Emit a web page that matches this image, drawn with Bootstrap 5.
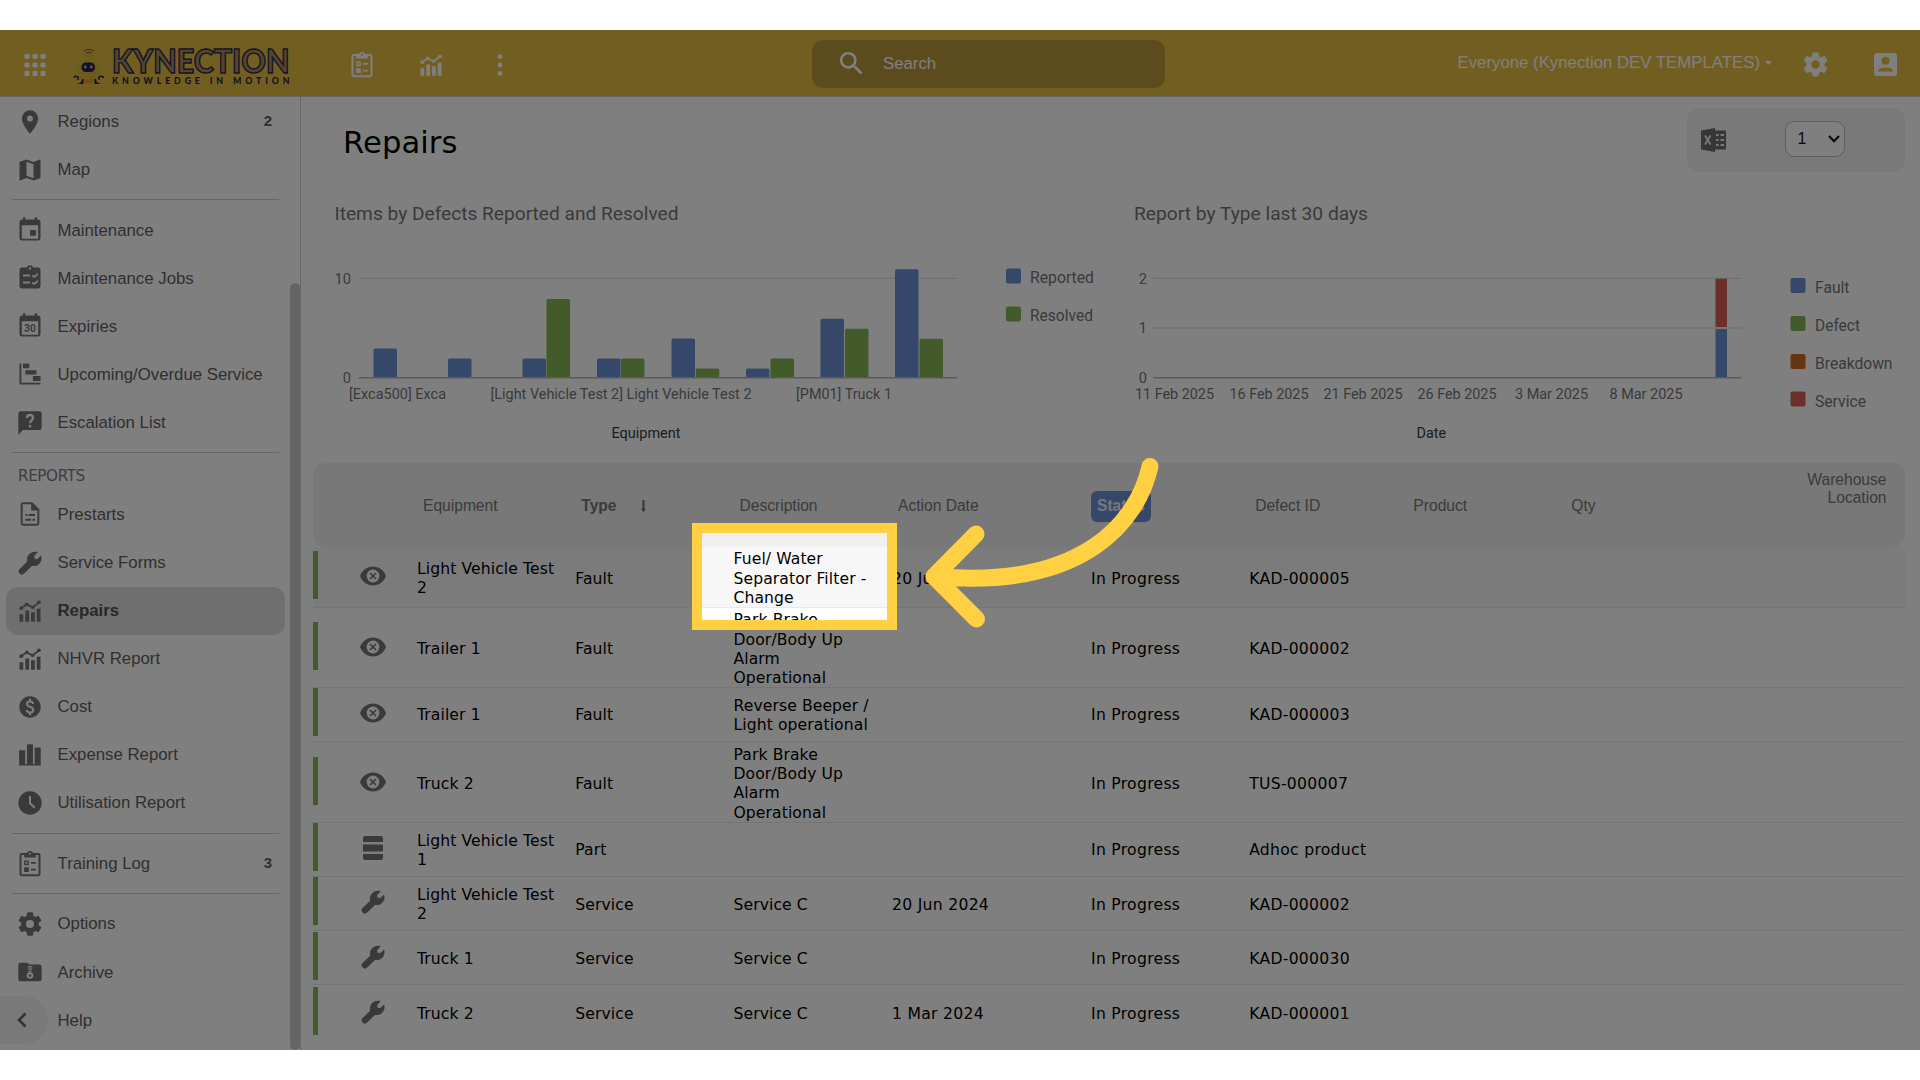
<!DOCTYPE html>
<html lang="en">
<head>
<meta charset="utf-8">
<meta name="viewport" content="width=device-width, initial-scale=1">
<title>Repairs</title>
<link href="https://cdn.jsdelivr.net/npm/bootstrap@5.3.0/dist/css/bootstrap.min.css" rel="stylesheet">
<style>
body{background:#fff;overflow:hidden;height:1080px;font-family:"Liberation Sans",Arial,sans-serif;color:#606060}
.app{margin-top:30px;height:1020px;background:#fff}
.topbar{height:67px;background:#e7bd45;border-bottom:1.5px solid #c9c9c9;padding:0 23px 0 24px;color:#fff}
.topbar svg{display:block}
.topicon{margin-top:3px}
.searchbox{width:353px;height:48px;border-radius:11px;background:#b9973a;padding-left:24px;font-size:16.8px;margin-left:309px;margin-top:1px}
.side{width:301px;border-right:1.5px solid #d0d0d0;padding:.5px 15px 0 6px;font-size:16.8px}
.side a{height:48.1px;color:#606060;text-decoration:none;padding:0 13px 0 9.5px;border-radius:12px}
.side a b{font-size:15px}
.side a svg{width:28px;height:28px;margin-right:14px;fill:#747474;color:#747474;flex:none}
.side a.on{background:#dedede;color:#535353;font-weight:700}
.side .rule{height:12.4px;padding:5.5px 6px 0 6px}
.side .rule::before{content:"";display:block;height:1px;background:#cacaca}
.side h6{margin:0;height:31.5px;padding:7px 0 0 12px;font:15.2px/20px "DejaVu Sans",sans-serif;letter-spacing:-.4px;color:#7d7d7d}
.thumb{right:0;top:185.5px;width:10px;height:767px;border-radius:5px;background:#cbcbcb}
.collapser{left:0;bottom:6px;width:48px;height:48px;background:#f3f3f3;border-radius:0 24px 24px 0;padding-left:16px}
.heading{height:83px;padding:11px 15.5px 0 42px}
.heading h1{font:30.6px/36px "DejaVu Sans",sans-serif;color:#000;margin:17px 0 0;letter-spacing:.1px}
.tools{width:217.5px;height:64px;border-radius:12px;background:#f2f2f2;padding:0 60px 1px 14px}
.pager{width:60px;height:36.5px;border:1.5px solid #bcbcbc;border-radius:9px;background:#fff;color:#111;font:16px "Liberation Sans",sans-serif;padding:0 4px 0 12px;margin-top:-1.5px}
.charts{height:283px}
.charts svg{font-family:Roboto,sans-serif;font-size:14.7px;fill:#757575;display:block}
.blu{fill:#6c90d2}.grn{fill:#86b654}.org{fill:#cf6c22}.red{fill:#d86054}
.grid-line{fill:#e2e2e2}.axis{fill:#b4b4b4}
.cap{font-size:19.2px}.axt{fill:#3a3a3a}
.list{margin:0 15.5px 0 11.500px;font:15.6px/19.4px "DejaVu Sans",sans-serif;letter-spacing:.1px;color:#000}
.line{display:grid;grid-template-columns:104.500px 158.3px 158.2px 158.5px 199px 158.2px 158.2px 158px 1fr;align-items:center;border-bottom:1.5px solid #e9e9e9}
.line>span{padding-top:3.6px}
.line>span:nth-child(n+5){letter-spacing:.3px}
.line.headrow{height:83.5px;border:0;border-radius:12px;background:#f0f0f0;font:15.6px/18px "Liberation Sans",sans-serif;color:#777;letter-spacing:0}
.headrow>span:nth-child(n){padding:2.5px 0 0 6px;letter-spacing:0}
.headrow>b{padding:2.5px 0 0 6px}
.line>.ico{display:flex;align-items:center;height:48px;border-left:5px solid #86b654;padding:2px 0 0 41.500px;margin-top:-4px}
.ico svg{width:28px;height:28px;fill:#747474;color:#747474}
.statusbtn{background:#6c90d2;color:#e9eefa;font-weight:700;border-radius:6px;padding:6.5px 6px;display:inline-block;margin-left:-6px}
.warehouse{padding:5.5px 18px 0 0}
.spot{left:692px;top:493px;width:205px;height:107px;border:10.3px solid #ffd142;box-shadow:0 0 0 2000px rgba(0,0,0,.5);z-index:5}
.pointer{left:0;top:-30px;z-index:6}
</style>
</head>
<body>
<svg width="0" height="0" class="position-absolute">
<defs>
<symbol id="pin" viewBox="0 0 24 24"><path d="M12,11.5A2.5,2.5 0 0,1 9.5,9A2.5,2.5 0 0,1 12,6.5A2.5,2.5 0 0,1 14.5,9A2.5,2.5 0 0,1 12,11.5M12,2A7,7 0 0,0 5,9C5,14.25 12,22 12,22C12,22 19,14.25 19,9A7,7 0 0,0 12,2Z"/></symbol>
<symbol id="map" viewBox="0 0 24 24"><path d="M15,19L9,16.89V5L15,7.11M20.5,3C20.44,3 20.39,3 20.34,3L15,5.1L9,3L3.36,4.9C3.15,4.97 3,5.15 3,5.38V20.5A0.5,0.5 0 0,0 3.5,21C3.55,21 3.61,21 3.66,20.97L9,18.9L15,21L20.64,19.1C20.85,19 21,18.85 21,18.62V3.5A0.5,0.5 0 0,0 20.5,3Z"/></symbol>
<symbol id="event" viewBox="0 0 24 24"><path d="M19,19.5H5V8H19M16,1V3H8V1H6V3H5C3.89,3 3,3.89 3,5V19A2,2 0 0,0 5,21H19A2,2 0 0,0 21,19V5C21,3.89 20.1,3 19,3H18V1M17,12H12V17H17V12Z"/></symbol>
<symbol id="jobs" viewBox="0 0 24 24"><path fill-rule="evenodd" d="M19,3H14.8A3,3 0 0,0 9.2,3H5A2,2 0 0,0 3,5V19A2,2 0 0,0 5,21H19A2,2 0 0,0 21,19V5A2,2 0 0,0 19,3M12,2.8A1,1 0 1,1 12,4.8A1,1 0 1,1 12,2.8M6,9H12V10.7H6ZM6,15H12V16.7H6ZM13.5,10.5L14.5,9.3L15.7,10L18.8,7.6V9.5L15.7,12ZM13.5,16.5L14.5,15.3L15.7,16L18.8,13.6V15.5L15.7,18Z"/></symbol>
<symbol id="cal30" viewBox="0 0 24 24"><path d="M19,19.5H5V8H19M16,1V3H8V1H6V3H5C3.89,3 3,3.89 3,5V19A2,2 0 0,0 5,21H19A2,2 0 0,0 21,19V5C21,3.89 20.1,3 19,3H18V1Z"/><text x="12" y="17.3" font-size="8.8" font-weight="700" text-anchor="middle" font-family="Roboto,sans-serif">30</text></symbol>
<symbol id="gantt" viewBox="0 0 24 24"><path d="M3,3H4.6V19.4H21V21H4A1,1 0 0,1 3,20ZM6,3H11.4V7H6ZM8,8.7H17.5V12.5H8ZM14.5,13.7H21V18H14.5Z"/></symbol>
<symbol id="ask" viewBox="0 0 24 24"><path d="M4,2H20A2,2 0 0,1 22,4V16A2,2 0 0,1 20,18H6L2,22V4A2,2 0 0,1 4,2Z"/><path d="M9.4,7.8C9.4,4.3 14.6,4.3 14.6,7.6C14.6,9.8 12,9.6 12,12.2M12,13.8V15.8" fill="none" stroke="#fff" stroke-width="2"/></symbol>
<symbol id="doc" viewBox="0 0 24 24"><path fill-rule="evenodd" d="M14,2H6A2,2 0 0,0 4,4V20A2,2 0 0,0 6,22H18A2,2 0 0,0 20,20V8ZM18.3,20.3H5.7V3.7H13V9H18.3ZM8,12H9.8V13.8H8ZM10.8,12H16.3V13.8H10.8ZM8,16H13V17.8H8ZM14.2,16H16.2V17.8H14.2Z"/></symbol>
<symbol id="wrench" viewBox="0 0 24 24"><path d="M3.100,20.900A2.700,2.700 0 0,1 3.100,17.100L9.500,10.900C8.600,6.600 11.500,2.500 16,2.300C17,2.250 18,2.400 18.700,2.700L15.600,5.900L15.900,8.300L18.300,8.600L21.500,5.500C23.200,10.300 19.500,15.300 13.700,14.600L7,21A2.700,2.700 0 0,1 3.100,20.900Z"/></symbol>
<symbol id="chart" viewBox="0 0 24 24"><path d="M3,14.8H6.2V21.2H3ZM8,11.5H11.2V21.2H8ZM12.9,13H16.1V21.2H12.9ZM17.8,10H21V21.2H17.8Z"/><path d="M4.4,9.6L9,6.4L14.3,8.9L19.8,4.5" fill="none" stroke="currentColor" stroke-width="1.5"/><circle cx="4.5" cy="9.6" r="1.6"/><circle cx="9.2" cy="6.3" r="1.5"/><circle cx="14.3" cy="8.9" r="1.4"/><circle cx="19.7" cy="4.5" r="1.6"/></symbol>
<symbol id="cost" viewBox="0 0 24 24"><circle cx="12" cy="12" r="9.2"/><path d="M14.7,9.3C14.2,6.6 9.4,6.7 9.4,9.4C9.4,12.3 14.8,11.2 14.8,14.5C14.8,17.4 9.4,17.4 9.1,14.5M12,5V7.4M12,16.7V19" fill="none" stroke="#fff" stroke-width="1.8"/></symbol>
<symbol id="bars" viewBox="0 0 24 24"><path d="M2.7,8H7.9V19.8H9.4V2.8H14.5V19.8H16V5.5H21.2V21H2.7Z"/></symbol>
<symbol id="clock" viewBox="0 0 24 24"><circle cx="12" cy="12" r="10"/><path d="M12,6V12.2L16,16" fill="none" stroke="#fff" stroke-width="1.7"/></symbol>
<symbol id="clip" viewBox="0 0 24 24"><path fill-rule="evenodd" d="M19,2.6H14.7A2.9,2.9 0 0,0 9.3,2.6H5A2,2 0 0,0 3,4.6V20.5A2,2 0 0,0 5,22.5H19A2,2 0 0,0 21,20.5V4.6A2,2 0 0,0 19,2.6M12,2.3A.9,.9 0 1,1 12,4.1A.9,.9 0 1,1 12,2.3M4.7,4.3H7V6.4H17V4.3H19.3V20.8H4.7ZM7,9V13H11V9ZM8.2,10.2H9.8V11.8H8.2ZM7,14.8V18.8H11V14.8ZM12.8,10.2V11.8H17V10.2ZM12.8,16V17.6H17V16Z"/></symbol>
<symbol id="cog" viewBox="0 0 24 24"><path d="M12,15.5A3.5,3.5 0 0,1 8.5,12A3.5,3.5 0 0,1 12,8.5A3.5,3.5 0 0,1 15.5,12A3.5,3.5 0 0,1 12,15.5M19.43,12.97C19.47,12.65 19.5,12.33 19.5,12C19.5,11.67 19.47,11.34 19.43,11L21.54,9.37C21.73,9.22 21.78,8.95 21.66,8.73L19.66,5.27C19.54,5.05 19.27,4.96 19.05,5.05L16.56,6.05C16.04,5.66 15.5,5.32 14.87,5.07L14.5,2.42C14.46,2.18 14.25,2 14,2H10C9.75,2 9.54,2.18 9.5,2.42L9.13,5.07C8.5,5.32 7.96,5.66 7.44,6.05L4.95,5.05C4.73,4.96 4.46,5.05 4.34,5.27L2.34,8.73C2.21,8.95 2.27,9.22 2.46,9.37L4.57,11C4.53,11.34 4.5,11.67 4.5,12C4.5,12.33 4.53,12.65 4.57,12.97L2.46,14.63C2.27,14.78 2.21,15.05 2.34,15.27L4.34,18.73C4.46,18.95 4.73,19.03 4.95,18.95L7.44,17.94C7.96,18.34 8.5,18.68 9.13,18.93L9.5,21.58C9.54,21.82 9.75,22 10,22H14C14.25,22 14.46,21.82 14.5,21.58L14.87,18.93C15.5,18.67 16.04,18.34 16.56,17.94L19.05,18.95C19.27,19.03 19.54,18.95 19.66,18.73L21.66,15.27C21.78,15.05 21.73,14.78 21.54,14.63L19.43,12.97Z"/></symbol>
<symbol id="zip" viewBox="0 0 24 24"><path d="M4,4H9.5L11.5,5.5H20A2,2 0 0,1 22,7.5V18A2,2 0 0,1 20,20H4A2,2 0 0,1 2,18V6A2,2 0 0,1 4,4Z"/><path d="M10,7.6H14M10,9.6H14M10.8,11.4H13.2" stroke="#fff" stroke-width="1.1"/><circle cx="12" cy="15" r="2" fill="none" stroke="#fff" stroke-width="1.7"/></symbol>
<symbol id="eye" viewBox="0 0 28 28"><path d="M1,14C3,8.500 8,4.500 14,4.500C20,4.500 25,8.500 27,14C25,19.500 20,23.500 14,23.500C8,23.500 3,19.500 1,14Z"/><circle cx="14" cy="14" r="6.400" fill="#fff"/><path d="M11,11L17,17M17,11L11,17" stroke="currentColor" stroke-width="1.600"/></symbol>
<symbol id="stack" viewBox="0 0 28 28"><path d="M6,2H22A2,2 0 0,1 24,4V8H4V4A2,2 0 0,1 6,2ZM4,10.500H24V17.500H4ZM4,20H24V24A2,2 0 0,1 22,26H6A2,2 0 0,1 4,24Z"/></symbol>
</defs>
</svg>

<div class="app position-relative overflow-hidden d-flex flex-column">
  <header class="topbar d-flex align-items-center flex-shrink-0">
    <svg class="topicon" width="22" height="22" viewBox="0 0 21 22" fill="#fff"><rect width="5" height="5" rx="1.300"/><rect x="8" width="5" height="5" rx="1.300"/><rect x="16" width="5" height="5" rx="1.300"/><rect y="8.500" width="5" height="5" rx="1.300"/><rect x="8" y="8.500" width="5" height="5" rx="1.300"/><rect x="16" y="8.500" width="5" height="5" rx="1.300"/><rect y="17" width="5" height="5" rx="1.300"/><rect x="8" y="17" width="5" height="5" rx="1.300"/><rect x="16" y="17" width="5" height="5" rx="1.300"/></svg>
    <svg width="230" height="58" viewBox="0 -8 230 58" style="margin-left:20px">
      <path d="M18,9Q23,6 28,9M20,11Q23,9.500 26,11" fill="none" stroke="#6f5c2c" stroke-width="1.200"/>
      <path d="M17,13Q23,10 29,13L26,15H20Z" fill="#d8b830"/>
      <path d="M10,30Q9,17 22.500,16.500Q36,17 35,30L32,35Q29,39 28,41H17Q16,38 13,35Z" fill="#dfb53b"/>
      <path d="M10,31Q10,18 22.500,17.500Q35,18 35,31" fill="none" stroke="#c8c83e" stroke-width="2.200"/>
      <path d="M18,36Q23,40 28,35L26,41H19Z" fill="#dc9a35"/>
      <rect x="15.500" y="20.500" width="13.500" height="9.500" rx="4.500" fill="#25244f"/><circle cx="19.300" cy="25" r="1.400" fill="#aeb8d8"/><circle cx="25.300" cy="25" r="1.400" fill="#aeb8d8"/>
      <path d="M8,36Q9,33 12,35V38M38,36Q36,33 33,35V38" fill="none" stroke="#25244f" stroke-width="1.500"/><path d="M11,42Q16,41 16,37H17.500V42ZM35,42Q30,41 30,37H28.500V42Z" fill="#25244f"/>
      <text x="46" y="30.500" textLength="177.500" lengthAdjust="spacingAndGlyphs" font-family="Lato,sans-serif" font-weight="900" font-size="31.500" fill="#a98d50" stroke="#2c2a58" stroke-width="1.400">KYNECTION</text>
      <text x="46" y="42.300" textLength="177.500" font-family="Lato,sans-serif" font-weight="900" font-size="8.800" fill="#25244f">KNOWLEDGE IN MOTION</text>
    </svg>
    <svg class="topicon" width="28" height="28" fill="#fff" style="margin-left:51.7px"><use href="#clip"/></svg>
    <svg class="topicon" width="28" height="28" fill="#fff" style="margin-left:41.6px"><use href="#chart"/></svg>
    <svg class="topicon" width="6" height="22" fill="#fff" style="margin-left:51.7px"><circle cx="3" cy="2.600" r="2.400"/><circle cx="3" cy="11" r="2.400"/><circle cx="3" cy="19.400" r="2.400"/></svg>
    <div class="searchbox d-flex align-items-center"><svg width="31" height="31" viewBox="0 0 24 24" fill="#fff" class="me-3"><path d="M9.500,3A6.500,6.500 0 0,1 16,9.500C16,11.110 15.410,12.590 14.440,13.730L14.710,14H15.500L20.500,19L19,20.500L14,15.500V14.710L13.730,14.440C12.590,15.410 11.110,16 9.500,16A6.500,6.500 0 0,1 3,9.500A6.500,6.500 0 0,1 9.500,3M9.500,5C7,5 5,7 5,9.500C5,12 7,14 9.500,14C12,14 14,12 14,9.500C14,7 12,5 9.500,5Z"/></svg>Search</div>
    <div class="ms-auto d-flex align-items-center"><span style="font-size:16.8px">Everyone (Kynection DEV TEMPLATES)</span><svg width="7" height="4" class="flex-shrink-0" fill="#fff" style="margin:0 25px 0 5px"><path d="M0,0H7L3.500,4Z"/></svg>
      <svg width="29" height="29" fill="#fff" class="ms-1 topicon"><use href="#cog"/></svg>
      <svg class="topicon" width="23" height="23" viewBox="0 0 23 23" style="margin-left:44px"><rect width="23" height="23" rx="3" fill="#fff"/><circle cx="11.500" cy="7.800" r="4" fill="#e7bd45"/><path d="M4,18.500Q4,14.500 11.500,14.500Q19,14.500 19,18.500Z" fill="#e7bd45"/></svg></div>
  </header>

  <div class="d-flex flex-grow-1 overflow-hidden">
    <nav class="side position-relative flex-shrink-0">
      <a class="d-flex align-items-center" href="#"><svg><use href="#pin"/></svg>Regions<b class="ms-auto">2</b></a>
      <a class="d-flex align-items-center" href="#"><svg><use href="#map"/></svg>Map</a>
      <div class="rule"></div>
      <a class="d-flex align-items-center" href="#"><svg><use href="#event"/></svg>Maintenance</a>
      <a class="d-flex align-items-center" href="#"><svg><use href="#jobs"/></svg>Maintenance Jobs</a>
      <a class="d-flex align-items-center" href="#"><svg><use href="#cal30"/></svg>Expiries</a>
      <a class="d-flex align-items-center" href="#"><svg><use href="#gantt"/></svg>Upcoming/Overdue Service</a>
      <a class="d-flex align-items-center" href="#"><svg><use href="#ask"/></svg>Escalation List</a>
      <div class="rule"></div>
      <h6>REPORTS</h6>
      <a class="d-flex align-items-center" href="#"><svg><use href="#doc"/></svg>Prestarts</a>
      <a class="d-flex align-items-center" href="#"><svg><use href="#wrench"/></svg>Service Forms</a>
      <a class="d-flex align-items-center on" href="#"><svg><use href="#chart"/></svg>Repairs</a>
      <a class="d-flex align-items-center" href="#"><svg><use href="#chart"/></svg>NHVR Report</a>
      <a class="d-flex align-items-center" href="#"><svg><use href="#cost"/></svg>Cost</a>
      <a class="d-flex align-items-center" href="#"><svg><use href="#bars"/></svg>Expense Report</a>
      <a class="d-flex align-items-center" href="#"><svg><use href="#clock"/></svg>Utilisation Report</a>
      <div class="rule"></div>
      <a class="d-flex align-items-center" href="#"><svg><use href="#clip"/></svg>Training Log<b class="ms-auto">3</b></a>
      <div class="rule"></div>
      <a class="d-flex align-items-center" href="#"><svg><use href="#cog"/></svg>Options</a>
      <a class="d-flex align-items-center" href="#"><svg><use href="#zip"/></svg>Archive</a>
      <a class="d-flex align-items-center" href="#"><svg></svg>Help</a>
      <div class="thumb position-absolute"></div>
      <div class="collapser position-absolute d-flex align-items-center"><svg width="12" height="16" fill="none" stroke="#666" stroke-width="2.600"><path d="M9.500,1.500L3,8L9.500,14.500"/></svg></div>
    </nav>

    <main class="flex-grow-1">
      <div class="heading d-flex justify-content-between">
        <h1>Repairs</h1>
        <div class="tools d-flex align-items-center justify-content-between">
          <svg width="26" height="24" viewBox="0 0 26 24"><path d="M0,2.500L14,0V24L0,21.500Z" fill="#6e6e6e"/><path d="M14,2.500H25V21.500H14Z" fill="#6e6e6e"/><path d="M15,7H17.500M15,12H17.500M15,17H17.500M19.500,7H23M19.500,12H23M19.500,17H23" stroke="#f2f2f2" stroke-width="2"/><path d="M4,7.500L9.500,16.500M9.500,7.500L4,16.500" stroke="#f2f2f2" stroke-width="1.800"/></svg>
          <div class="pager d-flex align-items-center justify-content-between"><span>1</span><svg width="12" height="8" fill="none" stroke="#111" stroke-width="2"><path d="M1,1L6,6.300L11,1"/></svg></div>
        </div>
      </div>
      <div class="charts d-flex">
        <svg width="809" height="283" viewBox="301 180 809 283">
          <text class="cap" x="334.500" y="219.500" textLength="344" lengthAdjust="spacingAndGlyphs">Items by Defects Reported and Resolved</text>
          <rect class="grid-line" x="358.500" y="277.700" width="599" height="1.400"/>
          <text x="351" y="283.500" text-anchor="end">10</text><text x="351" y="383" text-anchor="end">0</text>
          <g class="blu"><rect x="373.500" y="348.500" width="23.500" height="29" rx="1.500"/><rect x="448" y="358.500" width="23.500" height="19" rx="1.500"/><rect x="522.500" y="358.500" width="23.500" height="19" rx="1.500"/><rect x="597" y="358.500" width="23.500" height="19" rx="1.500"/><rect x="671.500" y="338.500" width="23.500" height="39" rx="1.500"/><rect x="746" y="368.500" width="23.500" height="9" rx="1.500"/><rect x="820.500" y="318.800" width="23.500" height="59" rx="1.500"/><rect x="895" y="269.200" width="23.500" height="108.500" rx="1.500"/><rect x="1006" y="268.500" width="15" height="15" rx="2"/></g>
          <g class="grn"><rect x="546.500" y="299" width="23.500" height="78.500" rx="1.500"/><rect x="621" y="358.500" width="23.500" height="19" rx="1.500"/><rect x="695.800" y="368.500" width="23.500" height="9" rx="1.500"/><rect x="770.500" y="358.500" width="23.500" height="19" rx="1.500"/><rect x="845" y="328.800" width="23.500" height="49" rx="1.500"/><rect x="919.500" y="338.800" width="23.500" height="39" rx="1.500"/><rect x="1006" y="306.500" width="15" height="15" rx="2"/></g>
          <rect class="axis" x="358.500" y="377" width="599" height="1.500"/>
          <text x="349" y="398.500" textLength="97" lengthAdjust="spacingAndGlyphs">[Exca500] Exca</text><text x="490.500" y="398.500" textLength="261" lengthAdjust="spacingAndGlyphs">[Light Vehicle Test 2] Light Vehicle Test 2</text><text x="796" y="398.500" textLength="96" lengthAdjust="spacingAndGlyphs">[PM01] Truck 1</text>
          <text class="axt" x="611.500" y="438" textLength="69" lengthAdjust="spacingAndGlyphs">Equipment</text>
          <g font-size="15.600"><text x="1030" y="283" textLength="64" lengthAdjust="spacingAndGlyphs">Reported</text><text x="1030" y="321" textLength="63" lengthAdjust="spacingAndGlyphs">Resolved</text></g>
        </svg>
        <svg width="809" height="283" viewBox="1110 180 809 283">
          <text class="cap" x="1134" y="219.500" textLength="234" lengthAdjust="spacingAndGlyphs">Report by Type last 30 days</text>
          <rect class="grid-line" x="1153.500" y="277.700" width="588" height="1.400"/><rect class="grid-line" x="1153.500" y="327.300" width="588" height="1.400"/>
          <rect class="red" x="1715.500" y="278.700" width="11.500" height="48.300"/><rect class="blu" x="1715.500" y="329" width="11.500" height="48.500"/>
          <rect class="axis" x="1153.500" y="377" width="588" height="1.500"/>
          <text x="1147" y="283.500" text-anchor="end">2</text><text x="1147" y="333" text-anchor="end">1</text><text x="1147" y="383" text-anchor="end">0</text>
          <text x="1135" y="398.500" textLength="79" lengthAdjust="spacingAndGlyphs">11 Feb 2025</text><text x="1229.500" y="398.500" textLength="79" lengthAdjust="spacingAndGlyphs">16 Feb 2025</text><text x="1323.500" y="398.500" textLength="79" lengthAdjust="spacingAndGlyphs">21 Feb 2025</text><text x="1417.500" y="398.500" textLength="79" lengthAdjust="spacingAndGlyphs">26 Feb 2025</text><text x="1515" y="398.500" textLength="73" lengthAdjust="spacingAndGlyphs">3 Mar 2025</text><text x="1609.500" y="398.500" textLength="73" lengthAdjust="spacingAndGlyphs">8 Mar 2025</text>
          <text class="axt" x="1416.500" y="438" textLength="29.500" lengthAdjust="spacingAndGlyphs">Date</text>
          <rect class="blu" x="1790.500" y="278" width="15" height="15" rx="2"/><rect class="grn" x="1790.500" y="316" width="15" height="15" rx="2"/><rect class="org" x="1790.500" y="354" width="15" height="15" rx="2"/><rect class="red" x="1790.500" y="391.500" width="15" height="15" rx="2"/>
          <g font-size="15.600"><text x="1815" y="292.500" textLength="34.500" lengthAdjust="spacingAndGlyphs">Fault</text><text x="1815" y="330.500" textLength="45" lengthAdjust="spacingAndGlyphs">Defect</text><text x="1815" y="368.500" textLength="77.500" lengthAdjust="spacingAndGlyphs">Breakdown</text><text x="1815" y="406.500" textLength="51" lengthAdjust="spacingAndGlyphs">Service</text></g>
        </svg>
      </div>
      <div class="list">
        <div class="line headrow"><i></i><span>Equipment</span><b class="d-flex align-items-center">Type<svg width="7" height="13" viewBox="0 0 7 13" fill="#777" style="margin-left:23px"><path d="M2.400,0H4.600V8.500H6L3.500,12.500L1,8.500H2.400Z"/></svg></b><span>Description</span><span>Action Date</span><span><span class="statusbtn">Status</span></span><span>Defect ID</span><span>Product</span><span class="d-flex justify-content-between align-items-center h-100">Qty<span class="text-end align-self-start warehouse">Warehouse<br>Location</span></span></div>
        <div class="line" style="height:61px;background:#f7f7f7"><span class="ico"><svg><use href="#eye"/></svg></span><span>Light Vehicle Test<br>2</span><span>Fault</span><span>Fuel/ Water<br>Separator Filter -<br>Change</span><span>20 Jun 2024</span><span>In Progress</span><span>KAD-000005</span></div>
        <div class="line" style="height:80px"><span class="ico"><svg><use href="#eye"/></svg></span><span>Trailer 1</span><span>Fault</span><span>Park Brake<br>Door/Body Up<br>Alarm<br>Operational</span><span></span><span>In Progress</span><span>KAD-000002</span></div>
        <div class="line" style="height:54.5px"><span class="ico"><svg><use href="#eye"/></svg></span><span>Trailer 1</span><span>Fault</span><span>Reverse Beeper /<br>Light operational</span><span></span><span>In Progress</span><span>KAD-000003</span></div>
        <div class="line" style="height:80.5px"><span class="ico"><svg><use href="#eye"/></svg></span><span>Truck 2</span><span>Fault</span><span>Park Brake<br>Door/Body Up<br>Alarm<br>Operational</span><span></span><span>In Progress</span><span>TUS-000007</span></div>
        <div class="line" style="height:54.3px"><span class="ico"><svg><use href="#stack"/></svg></span><span>Light Vehicle Test<br>1</span><span>Part</span><span></span><span></span><span>In Progress</span><span>Adhoc product</span></div>
        <div class="line" style="height:54.3px"><span class="ico"><svg><use href="#wrench"/></svg></span><span>Light Vehicle Test<br>2</span><span>Service</span><span>Service C</span><span>20 Jun 2024</span><span>In Progress</span><span>KAD-000002</span></div>
        <div class="line" style="height:54.3px"><span class="ico"><svg><use href="#wrench"/></svg></span><span>Truck 1</span><span>Service</span><span>Service C</span><span></span><span>In Progress</span><span>KAD-000030</span></div>
        <div class="line border-0" style="height:54.3px"><span class="ico"><svg><use href="#wrench"/></svg></span><span>Truck 2</span><span>Service</span><span>Service C</span><span>1 Mar 2024</span><span>In Progress</span><span>KAD-000001</span></div>
      </div>
    </main>
  </div>

  <div class="spot position-absolute"></div>
  <svg class="pointer position-absolute" width="1920" height="1080" fill="none" stroke="#ffd142" stroke-width="17" stroke-linecap="round" stroke-linejoin="round"><path d="M1150,466.500C1138,520 1085,590 935,576.500M976,534L934,576.500L976.500,619"/></svg>
</div>
<script src="https://cdn.jsdelivr.net/npm/bootstrap@5.3.0/dist/js/bootstrap.bundle.min.js"></script>
</body>
</html>
